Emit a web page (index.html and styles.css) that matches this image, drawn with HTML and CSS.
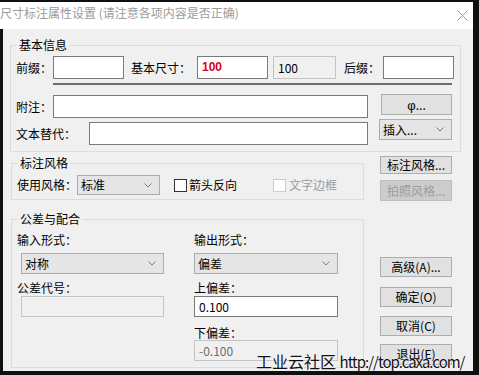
FILE: index.html
```html
<!DOCTYPE html>
<html lang="zh-CN">
<head>
<meta charset="UTF-8">
<title>尺寸标注属性设置</title>
<link rel="stylesheet" href="styles.css">
</head>
<body>
<div class="dialog">
    <div class="titlebar">
        <span class="title">尺寸标注属性设置 (请注意各项内容是否正确)</span>
        <svg class="close" width="11" height="11" viewBox="0 0 11 11"><path d="M0.5 0.5L10.5 10.5M10.5 0.5L0.5 10.5" stroke="#9a9a9a" stroke-width="1" fill="none"/></svg>
    </div>

    <div class="client">
        <!-- 基本信息 -->
        <fieldset class="group basic">
            <legend>基本信息</legend>
            <div class="row row-size">
                <span class="lbl w37">前缀：</span>
                <div class="edit w71"></div>
                <span class="lbl size-lbl">基本尺寸：</span>
                <div class="edit w71 red">100</div>
                <div class="edit ro grey-size">100</div>
                <span class="lbl suffix-lbl">后缀：</span>
                <div class="edit w71"></div>
            </div>
            <div class="sep"></div>
            <div class="row row-note">
                <span class="lbl w37 tall">附注：</span>
                <div class="edit note-in"></div>
                <div class="btn phi"><span class="greek">φ</span>...</div>
            </div>
            <div class="row row-text">
                <span class="lbl w73 tall">文本替代：</span>
                <div class="edit text-in"></div>
                <div class="combo insert">插入...<svg class="chev" width="8" height="5" viewBox="0 0 8 5"><path d="M0.5 0.5L4 4L7.5 0.5" stroke="#7a7a7a" fill="none"/></svg></div>
            </div>
        </fieldset>

        <div class="lower">
            <div class="left-col">
                <!-- 标注风格 -->
                <fieldset class="group style">
                    <legend>标注风格</legend>
                    <div class="row row-style">
                        <span class="lbl w60">使用风格：</span>
                        <div class="combo style-combo">标准<svg class="chev" width="8" height="5" viewBox="0 0 8 5"><path d="M0.5 0.5L4 4L7.5 0.5" stroke="#7a7a7a" fill="none"/></svg></div>
                        <div class="check arrow"><span class="box"></span>箭头反向</div>
                        <div class="check off"><span class="box"></span>文字边框</div>
                    </div>
                </fieldset>

                <!-- 公差与配合 -->
                <fieldset class="group tol">
                    <legend>公差与配合</legend>
                    <div class="tol-cols">
                        <div class="tol-col in-col">
                            <span class="lbl cap">输入形式：</span>
                            <div class="combo wide">对称<svg class="chev" width="8" height="5" viewBox="0 0 8 5"><path d="M0.5 0.5L4 4L7.5 0.5" stroke="#7a7a7a" fill="none"/></svg></div>
                            <span class="lbl cap mid">公差代号：</span>
                            <div class="edit ro wide under"></div>
                        </div>
                        <div class="tol-col out-col">
                            <span class="lbl cap">输出形式：</span>
                            <div class="combo wide">偏差<svg class="chev" width="8" height="5" viewBox="0 0 8 5"><path d="M0.5 0.5L4 4L7.5 0.5" stroke="#7a7a7a" fill="none"/></svg></div>
                            <span class="lbl cap mid">上偏差：</span>
                            <div class="edit wide under">0.100</div>
                            <span class="lbl cap low">下偏差：</span>
                            <div class="edit ro wide dim">-0.100</div>
                        </div>
                    </div>
                </fieldset>
            </div>

            <div class="btn-col">
                <div class="btn b-style">标注风格...</div>
                <div class="btn disabled b-photo">拍照风格...</div>
                <div class="btn b-adv">高级(A)...</div>
                <div class="btn b-ok">确定(O)</div>
                <div class="btn b-cancel">取消(C)</div>
                <div class="btn b-exit">退出(E)</div>
            </div>
        </div>
    </div>

    <div class="watermark">工业云社区 <span class="url">http://top.caxa.com/</span></div>
</div>
</body>
</html>
```

FILE: styles.css
```css
* {
    box-sizing: border-box;
}

body {
    margin: 0;
    background: #101010;
    overflow: hidden;
    font: 12px/14px "Noto Sans CJK SC", "Microsoft YaHei", sans-serif;
    color: #000;
}

.dialog {
    position: relative;
    width: 473px;
    height: 369px;
    margin-top: 2px;
    background: #f0f0f0;
}

/* 标题栏 */
.titlebar {
    height: 27px;
    background: #fff;
    display: flex;
    justify-content: space-between;
    align-items: flex-start;
    padding: 4px 5px 0 0;
}
.title {
    color: #9b9b9b;
}
.close {
    margin-top: 4px;
}

.client {
    height: 342px;
    border-left: 3px solid #101010;
    padding: 9px 0 0 7px;
}

/* 分组框 */
.group {
    margin: 0;
    padding: 0 0 0 5px;
    border: 1px solid #dcdcdc;
    min-width: 0;
}
.group legend {
    padding: 0 2px;
    margin-left: 1px;
    line-height: 14px;
}

.basic {
    width: 451px;
    padding-bottom: 6px;
}

.row {
    display: flex;
    align-items: flex-start;
}

.lbl {
    flex: none;
    white-space: nowrap;
}
.w37 { width: 37px; }
.w60 { width: 60px; }
.w71 { width: 71px; }
.w73 { width: 73px; }

.edit {
    flex: none;
    height: 23px;
    background: #fff;
    border: 1px solid #7a7a7a;
    padding-left: 4px;
    line-height: 21px;
}
.edit.ro {
    background: #f0f0f0;
    border-color: #c4c4c4;
}

.row-size {
    margin-top: 4px;
    line-height: 23px;
}
.size-lbl {
    margin-left: 7px;
    width: 66px;
}
.red {
    color: #e0001a;
    font-weight: bold;
    font-family: "Liberation Sans", sans-serif;
}
.grey-size {
    margin-left: 5px;
    width: 63px;
}
.suffix-lbl {
    margin-left: 8px;
    width: 39px;
}

.sep {
    margin: 4px 0 0 37px;
    width: 399px;
    height: 2px;
    background: #6e6e6e;
}

.row-note {
    margin-top: 9px;
}
.row-text {
    margin-top: 1px;
}
.tall {
    line-height: 23px;
}
.row-note .tall {
    margin-top: 1px;
}
.row-text .tall {
    margin-top: 3px;
}
.note-in {
    width: 315px;
    margin-top: 1px;
}
.text-in {
    width: 279px;
    margin-top: 3px;
}

/* 按钮 */
.btn {
    flex: none;
    height: 20px;
    background: #e1e1e1;
    border: 1px solid #adadad;
    text-align: center;
    line-height: 18px;
    white-space: nowrap;
}
.btn.disabled {
    background: #cccccc;
    border-color: #bfbfbf;
    color: #9c9c9c;
}
.phi {
    margin-left: 13px;
    width: 71px;
    height: 21px;
    line-height: 19px;
}
.greek {
    font-family: "Liberation Sans", sans-serif;
    font-size: 13px;
}

/* 下拉框 */
.combo {
    flex: none;
    position: relative;
    height: 21px;
    background: #e5e5e5;
    border: 1px solid #acacac;
    padding-left: 3px;
    line-height: 19px;
}
.chev {
    position: absolute;
    right: 7px;
    top: 7px;
}
.insert {
    margin-left: 11px;
    width: 73px;
}

.lower {
    display: flex;
}
.left-col {
    margin-left: 1px;
    width: 353px;
}

.style {
    margin-top: 4px;
    padding-bottom: 4px;
}
.row-style {
    margin-top: 5px;
    line-height: 20px;
    align-items: center;
}
.style-combo {
    width: 83px;
    height: 20px;
    line-height: 18px;
}

.check {
    display: flex;
    align-items: center;
    white-space: nowrap;
}
.check .box {
    width: 13px;
    height: 13px;
    border: 1px solid #333;
    background: #fff;
    margin-right: 2px;
}
.arrow {
    margin-left: 14px;
    width: 99px;
}
.check.off {
    color: #9c9c9c;
}
.check.off .box {
    border-color: #cccccc;
    margin-right: 3px;
}

.tol {
    margin-top: 12px;
    padding-bottom: 6px;
}
.tol-cols {
    display: flex;
}
.tol-col {
    display: flex;
    flex-direction: column;
    align-items: flex-start;
}
.in-col {
    width: 177px;
}
.in-col .wide {
    margin-left: 4px;
    width: 143px;
}
.out-col .wide {
    width: 144px;
}
.cap {
    margin-top: 7px;
}
.cap + .combo {
    margin-top: 6px;
}
.cap.mid {
    margin-top: 7px;
}
.cap.low {
    margin-top: 9px;
}
.tol .edit {
    height: 21px;
    line-height: 19px;
}
.under {
    margin-top: 1px;
}
.dim {
    color: #6d6d6d;
}

/* 右侧按钮列 */
.btn-col {
    margin-left: 16px;
    width: 72px;
    display: flex;
    flex-direction: column;
}
.b-style {
    margin-top: 4px;
    height: 18px;
    line-height: 16px;
}
.b-photo {
    margin-top: 6px;
    height: 21px;
    line-height: 19px;
}
.b-adv {
    margin-top: 56px;
}
.b-ok {
    margin-top: 10px;
}
.b-cancel {
    margin-top: 9px;
}
.b-exit {
    margin-top: 8px;
    height: 21px;
}

/* 水印 */
.watermark {
    position: absolute;
    left: 256px;
    top: 349px;
    font-size: 16px;
    line-height: 20px;
    color: #111;
    white-space: nowrap;
    text-shadow: 0 0 2px #fff, 0 0 1px #fff;
}
.watermark .url {
    font-size: 15px;
    letter-spacing: -1px;
}
```
